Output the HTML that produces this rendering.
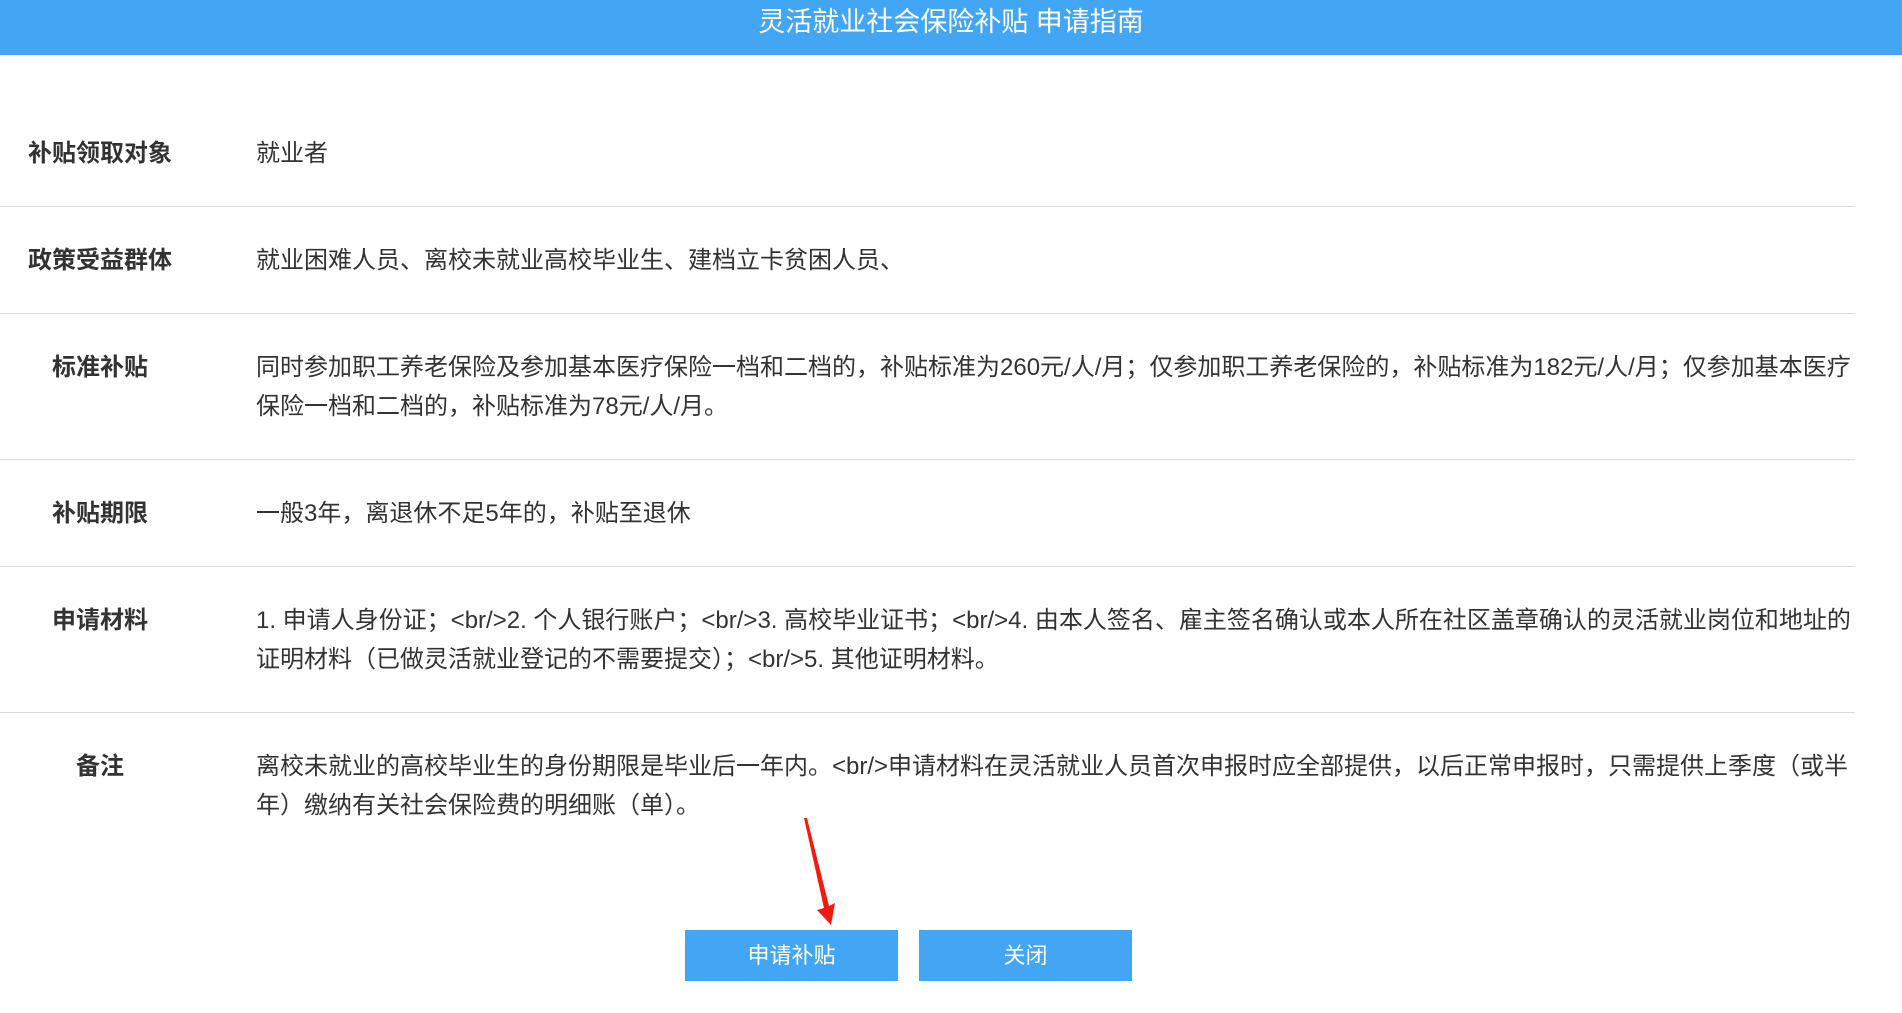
<!DOCTYPE html>
<html><head><meta charset="utf-8">
<style>
*{margin:0;padding:0;box-sizing:border-box}
html,body{width:1902px;height:1013px;background:#fff;overflow:hidden;font-family:"Liberation Sans","Noto Sans CJK SC",sans-serif;color:#333}
.hd{height:55px;background:#43a6f5;color:#fff;font-size:27px;text-align:center;line-height:45px}
.tbl{position:absolute;left:0;top:100px;width:1855px}
.row{display:flex;border-bottom:1px solid #dcdcdc;padding:34px 0 33px}
.row .l{width:200px;text-align:center;font-weight:bold;font-size:24px;line-height:39px;flex:none}
.row .v{margin-left:56px;width:1599px;font-size:24px;line-height:39px}
.row.last{border-bottom:none}
.btn{position:absolute;top:930px;width:213px;height:51px;background:#43a6f5;color:#fff;font-size:22px;text-align:center;line-height:51px}
</style></head><body>
<div class="hd">灵活就业社会保险补贴 申请指南</div>
<div class="tbl">
<div class="row"><div class="l">补贴领取对象</div><div class="v">就业者</div></div>
<div class="row"><div class="l">政策受益群体</div><div class="v">就业困难人员、离校未就业高校毕业生、建档立卡贫困人员、</div></div>
<div class="row"><div class="l">标准补贴</div><div class="v">同时参加职工养老保险及参加基本医疗保险一档和二档的，补贴标准为260元/人/月；仅参加职工养老保险的，补贴标准为182元/人/月；仅参加基本医疗保险一档和二档的，补贴标准为78元/人/月。</div></div>
<div class="row"><div class="l">补贴期限</div><div class="v">一般3年，离退休不足5年的，补贴至退休</div></div>
<div class="row"><div class="l">申请材料</div><div class="v">1. 申请人身份证；&lt;br/&gt;2. 个人银行账户；&lt;br/&gt;3. 高校毕业证书；&lt;br/&gt;4. 由本人签名、雇主签名确认或本人所在社区盖章确认的灵活就业岗位和地址的证明材料（已做灵活就业登记的不需要提交）；&lt;br/&gt;5. 其他证明材料。</div></div>
<div class="row last"><div class="l">备注</div><div class="v">离校未就业的高校毕业生的身份期限是毕业后一年内。&lt;br/&gt;申请材料在灵活就业人员首次申报时应全部提供，以后正常申报时，只需提供上季度（或半年）缴纳有关社会保险费的明细账（单）。</div></div>
</div>
<svg style="position:absolute;left:0;top:0" width="1902" height="1013"><polygon points="804,818 807,818 829,906 835,903 831,925 817,910 824,908" fill="#f01a10"/></svg>
<div class="btn" style="left:685px">申请补贴</div>
<div class="btn" style="left:919px">关闭</div>
</body></html>
